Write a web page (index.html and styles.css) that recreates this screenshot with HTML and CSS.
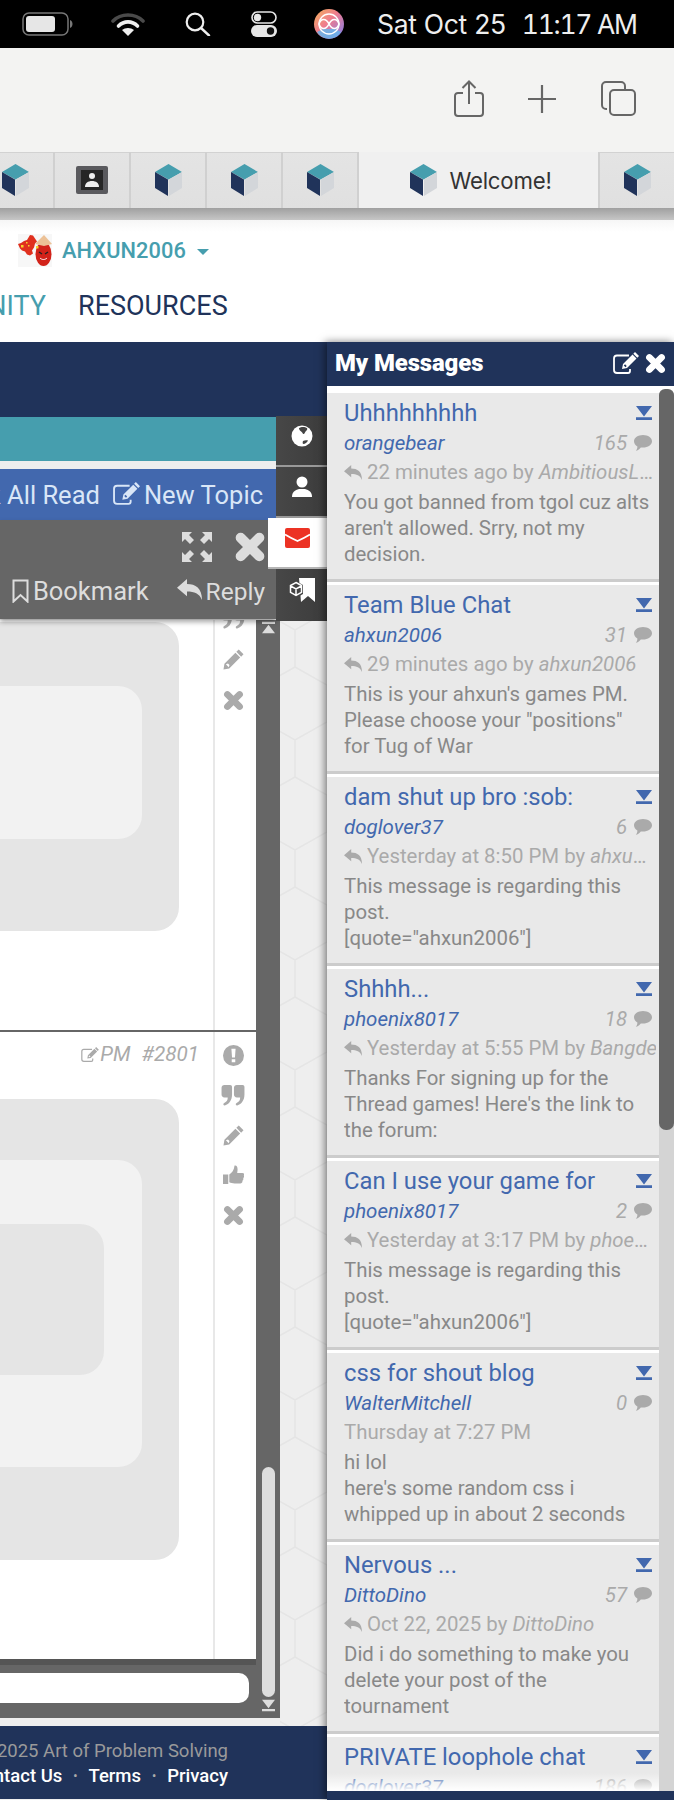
FILE: index.html
```html
<!DOCTYPE html>
<html lang="en">
<head>
<meta charset="utf-8">
<title>Welcome!</title>
<link rel="stylesheet" href="styles.css">
</head>
<body>
<svg class="sprite" width="0" height="0" aria-hidden="true">
  <symbol id="cube" viewBox="0 0 27 32"><path fill="#469eae" d="M13.5 0 27 8 13.5 15.5 0 8z"/><path fill="#20335a" d="M0 8l13 7.5V32L0 24z"/><path fill="#d3d6da" d="M14 15.500 27 8v16l-13 8z"/></symbol>
  <symbol id="close" viewBox="0 0 24 24"><path fill="none" stroke="currentColor" stroke-width="7.500" stroke-linecap="round" d="M5 5l14 14M19 5 5 19"/></symbol>
  <symbol id="collapse" viewBox="0 0 16 14"><path fill="currentColor" d="M0 0h16L8 10.500zM0 11.300h16V14H0z"/></symbol>
  <symbol id="bubble" viewBox="0 0 18 16"><path fill="currentColor" d="M9 0c5 0 9 2.800 9 6.300s-4 6.300-9 6.300c-.8 0-1.500-.1-2.200-.2C5.400 14 3.500 15.400 1.800 15.700c1-1.200 1.600-2.500 1.600-4.300C1.300 10.300 0 8.500 0 6.300 0 2.800 4 0 9 0z"/></symbol>
  <symbol id="reply" viewBox="0 0 18 15"><path fill="currentColor" d="M0 6.200 7.200 0v3.600c6.200 0 10.800 3 10.800 11.400-2-4.600-5.400-6-10.800-6v3.300z"/></symbol>
  <symbol id="pencil" viewBox="0 0 22 22"><path fill="currentColor" d="M16.500.500 21.500 5.500 19 8 14 3zM13 4l5 5L6.500 20.500.5 21.500 1.500 15.500zM3 16l3 3 .8-2.200-1.600-1.600z"/></symbol>
  <symbol id="quote" viewBox="0 0 24 22"><path fill="currentColor" d="M3 0h6c1.300 0 2 .8 2 2v8c0 6-3 10-7.500 11.500-1.200.2-1.800-.8-1.500-1.800.2-.6.600-.9 1.200-1.200C5.500 17.500 6.500 15.500 6.500 13H3c-1.800 0-3-1.200-3-3V3c0-1.800 1.200-3 3-3zM16 0h6c1.300 0 2 .8 2 2v8c0 6-3 10-7.500 11.500-1.200.2-1.800-.8-1.500-1.800.2-.6.600-.9 1.200-1.200 2.300-1 3.300-3 3.300-5.500H16c-1.800 0-3-1.200-3-3V3c0-1.800 1.200-3 3-3z"/></symbol>
  <symbol id="thumb" viewBox="0 0 20 20"><path fill="currentColor" d="M0 9h5v9H0zM6 9c2.500-1.500 4.500-4 5-8.500 2.500-.5 3.500 2 2.500 7h5c1.500 0 2 1.200 1.300 2.300.5 1 .3 2-.5 2.700.3 1 0 2-.8 2.500.2 1.500-.7 2.500-2 2.500H11c-2 0-3.500-.5-5-1z"/></symbol>
  <symbol id="alert" viewBox="0 0 20 20"><path fill="currentColor" fill-rule="evenodd" d="M10 0a10 10 0 1 1 0 20 10 10 0 0 1 0-20zM8 3.500l.6 8.500h2.800L12 3.500zM8.300 13.500v3h3.400v-3z"/></symbol>
  <symbol id="edit" viewBox="0 0 26 22"><path fill="none" stroke="currentColor" stroke-width="1.800" d="M17 17v2c0 1-.8 2-2 2H4c-1.700 0-3-1.300-3-3V6.500c0-1.700 1.300-3 3-3h12"/><path fill="currentColor" d="M22 0l4 4-1.700 1.700-4-4zM19.500 2.500l4 4-9.500 9.500-5 1 1-5zM10.800 13.500l1.700 1.700 1.200-1.300-1.600-1.600z"/></symbol>
</svg>

<header class="menubar">
  <svg class="mb-battery" viewBox="0 0 51 24"><rect x="1" y="1" width="45" height="22" rx="6" fill="none" stroke="#777" stroke-width="1.500"/><rect x="4" y="4" width="29" height="16" rx="3" fill="#e6e6e6"/><path d="M48 8c2 1 2.500 2.500 2.500 4s-.5 3-2.500 4z" fill="#777"/></svg>
  <svg class="mb-wifi" viewBox="0 0 34 24"><path d="M2 9C10 1 24 1 32 9" fill="none" stroke="#4a4a4a" stroke-width="3.600" stroke-linecap="round"/><path d="M7.500 14C13 8.500 21 8.500 26.500 14" fill="none" stroke="#eee" stroke-width="3.600" stroke-linecap="round"/><path d="M17 24l-6-6c3.200-2.800 8.800-2.800 12 0z" fill="#eee"/></svg>
  <svg class="mb-search" viewBox="0 0 26 24"><circle cx="10" cy="10" r="8.300" fill="none" stroke="#eee" stroke-width="2.200"/><path d="M16 16l8 7.500" stroke="#eee" stroke-width="2.400" stroke-linecap="round"/></svg>
  <svg class="mb-control" viewBox="0 0 26 26"><rect x="1" y="1" width="24" height="11" rx="5.500" fill="none" stroke="#e6e6e6" stroke-width="1.600"/><circle cx="6.500" cy="6.500" r="3.700" fill="#e6e6e6"/><rect y="14" width="26" height="12" rx="6" fill="#e6e6e6"/><circle cx="19.500" cy="20" r="3.700" fill="#111"/></svg>
  <svg class="mb-logo" viewBox="0 0 30 30"><defs><linearGradient id="orb" x1="0" y1="0" x2="1" y2="1"><stop offset="0" stop-color="#f2b35a"/><stop offset=".45" stop-color="#ef7c8e"/><stop offset="1" stop-color="#7a7df0"/></linearGradient></defs><circle cx="15" cy="15" r="15" fill="url(#orb)"/><path d="M3 23a14 14 0 0 0 24 0l-6-3H9z" fill="#62b8ee" opacity=".8"/><path d="M5 15c2-6 7-6 10 0s8 6 10 0c-2-6-7-6-10 0s-8 6-10 0z" fill="none" stroke="#fff" stroke-width="1.600"/><circle cx="15" cy="15" r="10" fill="none" stroke="#fff" stroke-width="1.300"/></svg>
  <span class="mb-date">Sat Oct 25</span>
  <span class="mb-time">11:17 AM</span>
</header>

<div class="toolbar">
  <svg class="tb-share" viewBox="0 0 30 37"><path d="M15 24V2M8.500 8 15 1.500 21.500 8M9 13H4c-1.800 0-3 1.200-3 3v17c0 1.800 1.200 3 3 3h22c1.800 0 3-1.200 3-3V16c0-1.800-1.200-3-3-3h-5" fill="none" stroke="#666" stroke-width="2"/></svg>
  <svg class="tb-plus" viewBox="0 0 28 28"><path d="M14 0v28M0 14h28" stroke="#666" stroke-width="2.200"/></svg>
  <svg class="tb-tabs" viewBox="0 0 35 35"><rect x="9" y="9" width="25" height="25" rx="4" fill="none" stroke="#666" stroke-width="2"/><path d="M6 28H5c-2.200 0-4-1.800-4-4V5c0-2.200 1.800-4 4-4h15c2.200 0 4 1.800 4 4v3" fill="none" stroke="#666" stroke-width="2"/></svg>
</div>

<nav class="tabstrip">
  <div class="tab tab-first"><svg class="cube"><use href="#cube"/></svg></div>
  <div class="tab"><svg class="contact" viewBox="0 0 32 28"><rect width="32" height="28" rx="2" fill="#5a5a5e"/><rect x="5" y="4" width="22" height="20" fill="#262626"/><circle cx="16" cy="10" r="3" fill="#eee"/><path d="M9 21c0-4 3-6 7-6s7 2 7 6z" fill="#eee"/></svg></div>
  <div class="tab"><svg class="cube"><use href="#cube"/></svg></div>
  <div class="tab"><svg class="cube"><use href="#cube"/></svg></div>
  <div class="tab"><svg class="cube"><use href="#cube"/></svg></div>
  <div class="tab tab-active"><svg class="cube"><use href="#cube"/></svg><span>Welcome!</span></div>
  <div class="tab tab-last"><svg class="cube"><use href="#cube"/></svg></div>
</nav>
<div class="browser-shadow"></div>

<header class="site-head">
  <div class="user">
    <svg class="avatar" viewBox="0 0 34 33"><rect width="34" height="33" fill="#f7f7f7"/><path d="M0 10l3-1 3-2 3-1 3-5 3 .5 2 3 2 3-2 2-1 4-2 3 1 3-3 2-3-1-2-3-3-1-2-2z" fill="#e0301e"/><path d="M3 11h2.500v2.500H3zM8 8h1.500v1.500H8zM10 11h1.500v1.500H10z" fill="#f6d32d"/><ellipse cx="25.500" cy="20" rx="8" ry="12" fill="#d2231a"/><path d="M17 10 26 1l8 9-8 2z" fill="#ecc196"/><path d="M18 12h2.500v2.500H18z" fill="#f6d32d"/><path d="M21 18l3 2M30 18l-3 2" stroke="#222" stroke-width="1.500"/><path d="M22 24c2 2 5 2 7 0" stroke="#fff" stroke-width="1" fill="none"/></svg>
    <span class="user-name">AHXUN2006</span>
    <span class="caret"></span>
  </div>
  <div class="site-nav">
    <span class="nav-cut"><span class="nav-community">COMMUNITY</span></span>
    <span class="nav-link">RESOURCES</span>
  </div>
</header>

<main class="workspace">
  <div class="page-side">
    <div class="navy-strip"></div>
    <div class="forum">
      <div class="forum-top">
        <div class="forum-bars">
          <div class="bar-teal"></div>
          <div class="bar-blue">
            <span class="bar-link bar-mark">Mark All Read</span>
            <span class="bar-link"><svg class="ic-newtopic"><use href="#edit"/></svg>New Topic</span>
          </div>
          <div class="bar-gray">
            <div class="gray-row gray-row-top">
              <svg class="ic-expand" viewBox="0 0 30 30"><path fill="currentColor" d="M0 0h10L7 3l5 5-4 4-5-5-3 3zM30 0v10l-3-3-5 5-4-4 5-5-3-3zM0 30V20l3 3 5-5 4 4-5 5 3 3zM30 30H20l3-3-5-5 4-4 5 5 3-3z"/></svg>
              <svg class="ic-bigx"><use href="#close"/></svg>
            </div>
            <div class="gray-row">
              <span class="gray-link"><svg class="ic-bookmark" viewBox="0 0 17 24"><path d="M1.500 1.500h14v21L8.500 16l-7 6.500z" fill="none" stroke="currentColor" stroke-width="2"/></svg>Bookmark</span>
              <span class="gray-link gray-reply"><svg class="ic-reply"><use href="#reply"/></svg>Reply</span>
            </div>
          </div>
        </div>
        <div class="side-tabs">
          <div class="side-tab"><svg class="ic-side" viewBox="0 0 22 22"><circle cx="11" cy="11" r="10.500" fill="#fff"/><path d="M8 3c2-1.500 6-1.500 8 0 1 2-1 2.500-2 4.500s-2 2-2.500.5S8 6 8 3zM12 16c1.500-1 4-1 5-.5-1 2-3 3.500-4.500 3.500-1 0-1-2-.5-3z" fill="#444"/></svg></div>
          <div class="side-tab"><svg class="ic-side" viewBox="0 0 20 22"><circle cx="10" cy="6" r="5.500" fill="#fff"/><path d="M0 21c0-5 3-7 7-8h6c4 1 7 3 7 8z" fill="#fff"/></svg></div>
          <div class="side-tab side-tab-on"><svg class="ic-mail" viewBox="0 0 25 20"><rect width="25" height="20" rx="2" fill="#ec3224"/><path d="M0 6.500c4 2.500 8 4.500 12.500 6.500C17 11 21 9 25 6.500" fill="none" stroke="#fff" stroke-width="1.800"/></svg></div>
          <div class="side-tab side-tab-last"><svg class="ic-store" viewBox="0 0 26 24"><path d="M10 0h16v24l-7-6-7 6z" fill="#fff"/><path d="M7 3l7 4v9l-7 4-7-4V7z" fill="#444"/><path d="M7 4.500l5.500 3v6.800L7 17.500l-5.500-3.200V7.500zM1.500 8 7 11l5.500-3M7 11v6.500" fill="none" stroke="#fff" stroke-width="1.500"/></svg></div>
        </div>
      </div>
      <div class="forum-lower">
        <div class="forum-window">
          <div class="thread-wrap">
            <div class="thread">
              <article class="post post-one">
                <div class="post-main">
                  <div class="block block-a1"><div class="block block-a2"></div></div>
                </div>
                <div class="post-tools post-tools-one">
                  <svg class="ic-tool ic-clipquote"><use href="#quote"/></svg>
                  <svg class="ic-tool"><use href="#pencil"/></svg>
                  <svg class="ic-tool"><use href="#close"/></svg>
                </div>
              </article>
              <article class="post post-two">
                <div class="post-main">
                  <div class="post-meta"><svg class="ic-meta"><use href="#edit"/></svg><span>PM</span><span class="post-num">#2801</span></div>
                  <div class="block block-b1"><div class="block block-b2"><div class="block block-b3"></div></div></div>
                </div>
                <div class="post-tools">
                  <svg class="ic-tool"><use href="#alert"/></svg>
                  <svg class="ic-tool ic-quote"><use href="#quote"/></svg>
                  <svg class="ic-tool"><use href="#pencil"/></svg>
                  <svg class="ic-tool"><use href="#thumb"/></svg>
                  <svg class="ic-tool"><use href="#close"/></svg>
                </div>
              </article>
            </div>
            <div class="reply-box"><div class="reply-input"></div></div>
          </div>
          <div class="forum-scroll">
            <svg class="arrow-up"><use href="#collapse"/></svg>
            <div class="forum-thumb"></div>
            <svg class="arrow-down"><use href="#collapse"/></svg>
          </div>
        </div>
        <svg class="hex-gutter" aria-hidden="true"><defs><pattern id="hex" width="64" height="110" patternUnits="userSpaceOnUse" x="-17" y="10"><path d="M32 0v37M32 37 0 55M32 37l32 18M0 55v37M64 55v37M0 92l32 18M64 92l-32 18" fill="none" stroke="#e5e5e5" stroke-width="1.500"/></pattern></defs><rect width="100%" height="100%" fill="url(#hex)"/></svg>
      </div>
    </div>
    <footer class="site-foot">
      <div class="foot-copy">© 2025 Art of Problem Solving</div>
      <div class="foot-links"><span>Contact Us</span><i>•</i><span>Terms</span><i>•</i><span>Privacy</span></div>
    </footer>
  </div>

  <aside class="messages">
    <div class="msg-head">
      <span class="msg-title">My Messages</span>
      <svg class="ic-compose"><use href="#edit"/></svg>
      <svg class="ic-msgclose"><use href="#close"/></svg>
    </div>
    <div class="msg-body">
      <div class="msg-list">
        <section class="msg">
          <div class="msg-row"><h3 class="msg-subject">Uhhhhhhhhh</h3><svg class="ic-collapse"><use href="#collapse"/></svg></div>
          <div class="msg-row"><span class="msg-author">orangebear</span><span class="msg-count">165</span><svg class="ic-bubble"><use href="#bubble"/></svg></div>
          <div class="msg-last"><svg class="ic-lastreply"><use href="#reply"/></svg><span class="msg-last-text">22 minutes ago by <em>AmbitiousLlama</em></span></div>
          <p class="msg-text">You got banned from tgol cuz alts aren't allowed. Srry, not my decision.</p>
        </section>
        <section class="msg">
          <div class="msg-row"><h3 class="msg-subject">Team Blue Chat</h3><svg class="ic-collapse"><use href="#collapse"/></svg></div>
          <div class="msg-row"><span class="msg-author">ahxun2006</span><span class="msg-count">31</span><svg class="ic-bubble"><use href="#bubble"/></svg></div>
          <div class="msg-last"><svg class="ic-lastreply"><use href="#reply"/></svg><span class="msg-last-text">29 minutes ago by <em>ahxun2006</em></span></div>
          <p class="msg-text">This is your ahxun's games PM. Please choose your "positions" for Tug of War</p>
        </section>
        <section class="msg">
          <div class="msg-row"><h3 class="msg-subject">dam shut up bro :sob:</h3><svg class="ic-collapse"><use href="#collapse"/></svg></div>
          <div class="msg-row"><span class="msg-author">doglover37</span><span class="msg-count">6</span><svg class="ic-bubble"><use href="#bubble"/></svg></div>
          <div class="msg-last"><svg class="ic-lastreply"><use href="#reply"/></svg><span class="msg-last-text">Yesterday at 8:50 PM by <em>ahxun2006</em></span></div>
          <p class="msg-text">This message is regarding this post.<br>[quote="ahxun2006"]</p>
        </section>
        <section class="msg">
          <div class="msg-row"><h3 class="msg-subject">Shhhh...</h3><svg class="ic-collapse"><use href="#collapse"/></svg></div>
          <div class="msg-row"><span class="msg-author">phoenix8017</span><span class="msg-count">18</span><svg class="ic-bubble"><use href="#bubble"/></svg></div>
          <div class="msg-last"><svg class="ic-lastreply"><use href="#reply"/></svg><span class="msg-last-text msg-last-clip">Yesterday at 5:55 PM by <em>Bangde</em></span></div>
          <p class="msg-text">Thanks For signing up for the Thread games! Here's the link to the forum:</p>
        </section>
        <section class="msg">
          <div class="msg-row"><h3 class="msg-subject">Can I use your game for</h3><svg class="ic-collapse"><use href="#collapse"/></svg></div>
          <div class="msg-row"><span class="msg-author">phoenix8017</span><span class="msg-count">2</span><svg class="ic-bubble"><use href="#bubble"/></svg></div>
          <div class="msg-last"><svg class="ic-lastreply"><use href="#reply"/></svg><span class="msg-last-text">Yesterday at 3:17 PM by <em>phoenix8017</em></span></div>
          <p class="msg-text">This message is regarding this post.<br>[quote="ahxun2006"]</p>
        </section>
        <section class="msg">
          <div class="msg-row"><h3 class="msg-subject">css for shout blog</h3><svg class="ic-collapse"><use href="#collapse"/></svg></div>
          <div class="msg-row"><span class="msg-author">WalterMitchell</span><span class="msg-count">0</span><svg class="ic-bubble"><use href="#bubble"/></svg></div>
          <div class="msg-last"><span class="msg-last-text">Thursday at 7:27 PM</span></div>
          <p class="msg-text">hi lol<br>here's some random css i whipped up in about 2 seconds</p>
        </section>
        <section class="msg">
          <div class="msg-row"><h3 class="msg-subject">Nervous ...</h3><svg class="ic-collapse"><use href="#collapse"/></svg></div>
          <div class="msg-row"><span class="msg-author">DittoDino</span><span class="msg-count">57</span><svg class="ic-bubble"><use href="#bubble"/></svg></div>
          <div class="msg-last"><svg class="ic-lastreply"><use href="#reply"/></svg><span class="msg-last-text">Oct 22, 2025 by <em>DittoDino</em></span></div>
          <p class="msg-text">Did i do something to make you delete your post of the tournament</p>
        </section>
        <section class="msg">
          <div class="msg-row"><h3 class="msg-subject">PRIVATE loophole chat</h3><svg class="ic-collapse"><use href="#collapse"/></svg></div>
          <div class="msg-row"><span class="msg-author">doglover37</span><span class="msg-count">186</span><svg class="ic-bubble"><use href="#bubble"/></svg></div>
        </section>
        <div class="msg-fade"></div>
      </div>
      <div class="msg-track"><div class="msg-thumb"></div></div>
    </div>
  </aside>
</main>
</body>
</html>
```

FILE: styles.css
```css
* { box-sizing: border-box; }
html, body { margin: 0; padding: 0; }
body {
  width: 674px;
  height: 1800px;
  overflow: hidden;
  display: flex;
  flex-direction: column;
  background: #fff;
  font-family: Roboto, "Liberation Sans", sans-serif;
}
svg { display: block; flex: none; }
.sprite { position: absolute; }

/* macOS menu bar */
.menubar {
  height: 48px;
  flex: none;
  background: #000;
  color: #eee;
  display: flex;
  align-items: center;
  padding-left: 22px;
}
.mb-battery { width: 51px; height: 24px; margin-right: 38px; }
.mb-wifi { width: 34px; height: 24px; margin-right: 40px; }
.mb-search { width: 26px; height: 24px; margin-right: 40px; }
.mb-control { width: 26px; height: 26px; margin-right: 37px; }
.mb-logo { width: 30px; height: 30px; margin-right: 33px; }
.mb-date, .mb-time { font: 400 26.500px Inter, Roboto, sans-serif; letter-spacing: -.3px; white-space: nowrap; }
.mb-date { margin-right: 16px; }
.mb-time { font-variant-numeric: tabular-nums; letter-spacing: -1.300px; }

/* Browser chrome */
.toolbar {
  height: 104px;
  flex: none;
  background: #f3f3f2;
  display: flex;
  align-items: flex-start;
  padding: 32px 0 0 454px;
}
.tb-share { width: 30px; height: 37px; margin-right: 44px; }
.tb-plus { width: 28px; height: 28px; margin: 5px 45px 0 0; }
.tb-tabs { width: 35px; height: 35px; margin-top: 1px; }

.tabstrip {
  height: 56px;
  flex: none;
  display: flex;
  background: linear-gradient(#e4e4e4, #e0e0e0);
  box-shadow: inset 0 1px 0 #d2d2d2;
}
.tab {
  flex: none;
  width: 76px;
  display: flex;
  align-items: center;
  justify-content: center;
  border-right: 2px solid #d0d0d0;
}
.tab-first { width: 55px; justify-content: flex-end; padding-right: 24px; }
.cube { width: 27px; height: 32px; }
.contact { width: 32px; height: 28px; }
.tab-active {
  width: 239px;
  background: #f0f0f0;
  border-right: 0;
  box-shadow: inset 0 1px 0 #f0f0f0;
  color: #333;
  font: 400 22.200px Inter, Roboto, sans-serif;
  letter-spacing: -.2px;
  gap: 12px;
  padding-left: 5px;
}
.tab-last { border-left: 2px solid #d0d0d0; border-right: 0; }
.browser-shadow {
  height: 12px;
  flex: none;
  background: linear-gradient(#a0a0a0, #c6c6c6);
}

/* Site header */
.site-head {
  height: 122px;
  flex: none;
  background: linear-gradient(#f6f6f6, #fff 12px);
  overflow: hidden;
}
.user {
  display: flex;
  align-items: center;
  padding: 14px 0 0 18px;
  height: 47px;
}
.avatar { width: 34px; height: 33px; margin-right: 10px; }
.user-name { color: #469eae; font-size: 21.800px; font-weight: 500; letter-spacing: .1px; }
.caret {
  width: 0;
  height: 0;
  margin: 2px 0 0 11px;
  border: 6px solid transparent;
  border-top: 6px solid #469eae;
  border-bottom: 0;
}
.site-nav { display: flex; align-items: center; padding-top: 23px; font-size: 27px; white-space: nowrap; }
.nav-cut { width: 46px; flex: none; display: flex; justify-content: flex-end; overflow: hidden; }
.nav-community { color: #469eae; flex: none; }
.nav-link { color: #20335a; margin-left: 32px; }

/* Main region */
.workspace { flex: 1; display: flex; min-height: 0; }
.page-side {
  width: 327px;
  flex: none;
  display: flex;
  flex-direction: column;
  background: #eee;
}
.navy-strip { height: 75px; flex: none; background: #20335a; }
.forum { flex: 1; display: flex; flex-direction: column; min-height: 0; }
.forum-top { display: flex; flex: none; position: relative; z-index: 2; }
.forum-bars { width: 276px; flex: none; }
.bar-teal { height: 44px; background: #469eae; }
.bar-blue {
  height: 51px;
  margin-top: 8px;
  background: #4268ae;
  color: #d9e6f7;
  font-size: 25.500px;
  display: flex;
  justify-content: flex-end;
  align-items: center;
  gap: 13px;
  padding-right: 13px;
  white-space: nowrap;
  overflow: hidden;
}
.bar-link { display: flex; align-items: center; flex: none; }
.ic-newtopic { width: 27px; height: 23px; margin-right: 4px; margin-top: -2px; }
.bar-gray {
  height: 99px;
  background: #666;
  color: #ddd;
  box-shadow: 0 3px 5px rgba(0, 0, 0, .35);
  overflow: hidden;
}
.gray-row { display: flex; align-items: center; justify-content: flex-end; padding-right: 11px; white-space: nowrap; }
.gray-row-top { height: 54px; gap: 22px; padding-right: 10px; }
.ic-expand { width: 30px; height: 30px; }
.ic-bigx { width: 32px; height: 32px; }
.gray-link { display: flex; align-items: center; font-size: 25.500px; flex: none; height: 34px; }
.gray-reply { margin-left: 28px; font-size: 24.500px; }
.ic-bookmark { width: 17px; height: 24px; margin-right: 4px; }
.ic-reply { width: 25px; height: 21px; margin-right: 4px; margin-top: -3px; }

.side-tabs { width: 51px; flex: none; margin-top: -1px; display: flex; flex-direction: column; }
.side-tab {
  height: 51px;
  background: linear-gradient(90deg, #474747, #3c3c3c);
  border-bottom: 2px solid #999;
  display: flex;
  align-items: center;
  justify-content: center;
  position: relative;
}
.side-tab-on {
  background: #fff;
  margin-left: -8px;
  border-bottom: 2px solid #b5b5b5;
}
.side-tab-last { border-bottom: 0; height: 52px; }
.ic-side { width: 22px; height: 22px; margin-top: -9px; }
.ic-mail { width: 25px; height: 20px; margin-top: -9px; }
.ic-store { width: 26px; height: 24px; margin-top: -10px; }

.forum-lower { flex: 1; display: flex; min-height: 0; margin-top: -1px; }
.forum-window {
  width: 280px;
  height: 1098px;
  flex: none;
  background: #666;
  display: flex;
}
.thread-wrap { width: 256px; flex: none; display: flex; flex-direction: column; }
.thread { height: 1045px; flex: none; background: #fff; border-bottom: 6px solid #555; overflow: hidden; }
.post { display: flex; overflow: hidden; }
.post-one { height: 410px; }
.post-two { height: 629px; border-top: 2px solid #666; }
.post-main { width: 213px; flex: none; overflow: hidden; }
.post-tools {
  width: 43px;
  flex: none;
  border-left: 2px solid #e8e8e8;
  display: flex;
  flex-direction: column;
  align-items: center;
  color: #aaa;
  gap: 19px;
  padding: 13px 5px 0 0;
}
.post-tools-one { padding-top: 0; margin-top: -12px; gap: 20px; }
.ic-tool { width: 21px; height: 21px; }
.ic-quote { width: 24px; }
.ic-clipquote { width: 24px; }
.block { background: #e5e5e5; border-radius: 24px; }
.block-a1 { width: 219px; height: 309px; margin: 2px 0 0 -40px; padding-top: 64px; }
.block-a2 { width: 182px; height: 153px; background: #f2f2f2; }
.post-meta {
  height: 67px;
  display: flex;
  justify-content: flex-end;
  align-items: flex-start;
  padding: 10px 14px 0 0;
  color: #aaa;
  font-size: 20.700px;
  font-style: italic;
}
.ic-meta { width: 18px; height: 15px; margin: 5px 1px 0 0; }
.post-num { margin-left: 11px; }
.block-b1 { width: 219px; height: 461px; margin-left: -40px; padding-top: 61px; }
.block-b2 { width: 182px; height: 307px; background: #f2f2f2; padding-top: 64px; }
.block-b3 { width: 144px; height: 151px; }
.reply-box { padding: 8px 7px 0 0; }
.reply-input { height: 30px; background: #fff; border-radius: 0 10px 10px 0; }
.forum-scroll {
  width: 24px;
  flex: none;
  display: flex;
  flex-direction: column;
  align-items: center;
  padding: 1px 0 6px;
  color: #ddd;
}
.arrow-up { width: 13px; height: 13px; transform: scaleY(-1); }
.arrow-down { width: 13px; height: 13px; margin-top: 2px; }
.forum-thumb {
  width: 13px;
  height: 230px;
  margin-top: auto;
  background: #ddd;
  border-radius: 7px;
}
.hex-gutter { flex: 1; height: 100%; min-width: 0; }

.site-foot {
  height: 73px;
  flex: none;
  margin-bottom: 1px;
  background: #20335a;
  display: flex;
  flex-direction: column;
  align-items: flex-end;
  padding: 13px 99px 0 0;
  font-size: 18.500px;
  line-height: 25px;
  white-space: nowrap;
  overflow: hidden;
}
.foot-copy { color: #9a9a9a; }
.foot-links { color: #fff; font-weight: 500; display: flex; }
.foot-links i { font-style: normal; color: #aaa; font-size: 12px; margin: 0 11px; }

/* Messages panel */
.messages {
  width: 347px;
  flex: none;
  display: flex;
  flex-direction: column;
  background: #20335a;
  padding-bottom: 9px;
  box-shadow: -2px 0 8px rgba(0, 0, 0, .5);
  position: relative;
  z-index: 3;
}
.msg-head {
  height: 44px;
  flex: none;
  display: flex;
  align-items: center;
  padding: 0 8px 2px 8px;
  color: #fff;
}
.msg-title { font-size: 23.900px; font-weight: 900; margin-right: auto; letter-spacing: -.1px; }
.ic-compose { width: 26px; height: 22px; margin-right: 6px; }
.ic-msgclose { width: 21px; height: 21px; }
.msg-body { flex: 1; display: flex; min-height: 0; background: #fff; overflow: hidden; }
.msg-list {
  width: 332px;
  flex: none;
  overflow: hidden;
  padding-top: 7px;
  position: relative;
}
.msg {
  height: 192px;
  background: #e9e9e9;
  box-shadow: inset 0 -3px 0 #ccc;
  padding: 5px 7px 0 17px;
  border-bottom: 3px solid #fff;
  overflow: hidden;
}
.msg-row { display: flex; align-items: center; height: 30px; }
.msg-subject {
  margin: 0 auto 0 0;
  color: #4268ae;
  font-size: 23.800px;
  font-weight: 400;
  line-height: 30px;
  white-space: nowrap;
}
.ic-collapse { width: 16px; height: 14px; color: #4268ae; }
.msg-author { color: #4268ae; font-size: 20.500px; font-style: italic; margin-right: auto; }
.msg-count { color: #aaa; font-size: 20.400px; font-style: italic; margin-right: 7px; }
.ic-bubble { width: 18px; height: 16px; color: #aaa; }
.msg-last { display: flex; align-items: center; height: 28px; color: #aaa; font-size: 20.400px; width: 312px; }
.ic-lastreply { width: 18px; height: 15px; margin-right: 5px; }
.msg-last-text { white-space: nowrap; overflow: hidden; text-overflow: ellipsis; min-width: 0; }
.msg-last-clip { text-overflow: clip; }
.msg-text {
  margin: 3px 0 0;
  color: #888;
  font-size: 20.400px;
  line-height: 26px;
  width: 306px;
  height: 78px;
  overflow: hidden;
}
.msg-fade {
  position: absolute;
  left: 0;
  right: 0;
  bottom: 0;
  height: 18px;
  background: linear-gradient(rgba(255, 255, 255, 0), #fff);
}
.msg-track { width: 15px; flex: none; background: #d4d4d4; padding-top: 3px; box-shadow: inset 0 7px 0 #fff; }
.msg-thumb { height: 741px; background: #666; border-radius: 6px 6px 7px 7px; }
```
